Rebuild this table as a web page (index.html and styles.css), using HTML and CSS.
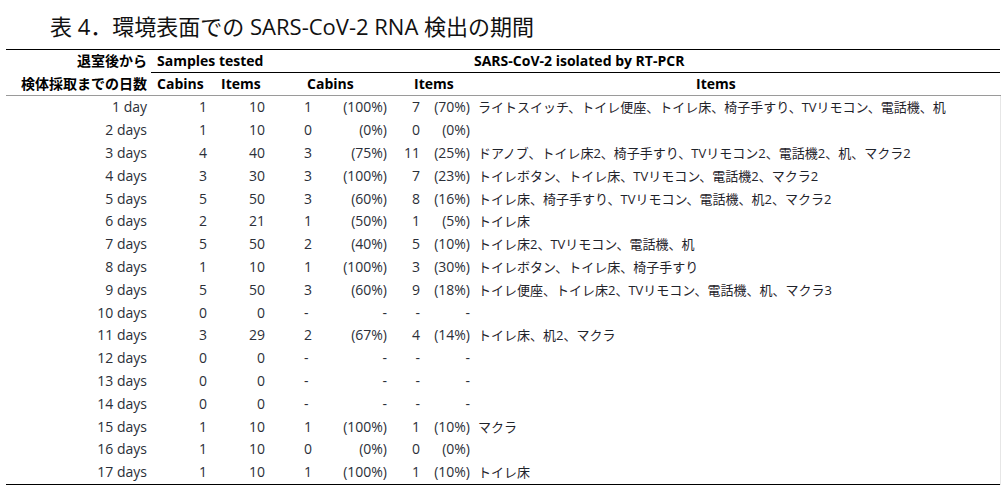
FILE: index.html
```html
<!DOCTYPE html>
<html lang="ja">
<head>
<meta charset="utf-8">
<title>表4．環境表面での SARS-CoV-2 RNA 検出の期間</title>
<link rel="stylesheet" href="styles.css">
</head>
<body>
<h1 class="title">表 4．環境表面での SARS-CoV-2 RNA 検出の期間</h1>
<table class="tbl">
  <colgroup>
    <col class="w-days"><col class="w-sc"><col class="w-si"><col class="w-cc"><col class="w-cp"><col class="w-ic"><col class="w-ip"><col class="w-it">
  </colgroup>
  <thead>
    <tr class="hr1">
      <th class="h-days">退室後から</th>
      <th class="h-samples" colspan="2">Samples tested</th>
      <th class="h-sars" colspan="5">SARS-CoV-2 isolated by RT-PCR</th>
    </tr>
    <tr class="hr2">
      <th class="h-days">検体採取までの日数</th>
      <th class="h-scab">Cabins</th>
      <th class="h-sitm">Items</th>
      <th class="h-ccab" colspan="2">Cabins</th>
      <th class="h-citm" colspan="2">Items</th>
      <th class="h-list">Items</th>
    </tr>
  </thead>
  <tbody>
    <tr><td class="d">1 day</td><td class="n1">1</td><td class="n2">10</td><td class="c">1</td><td class="p">(100%)</td><td class="ic">7</td><td class="ip">(70%)</td><td class="it">ライトスイッチ、トイレ便座、トイレ床、椅子手すり、TVリモコン、電話機、机</td></tr>
    <tr><td class="d">2 days</td><td class="n1">1</td><td class="n2">10</td><td class="c">0</td><td class="p">(0%)</td><td class="ic">0</td><td class="ip">(0%)</td><td class="it"></td></tr>
    <tr><td class="d">3 days</td><td class="n1">4</td><td class="n2">40</td><td class="c">3</td><td class="p">(75%)</td><td class="ic">11</td><td class="ip">(25%)</td><td class="it">ドアノブ、トイレ床2、椅子手すり、TVリモコン2、電話機2、机、マクラ2</td></tr>
    <tr><td class="d">4 days</td><td class="n1">3</td><td class="n2">30</td><td class="c">3</td><td class="p">(100%)</td><td class="ic">7</td><td class="ip">(23%)</td><td class="it">トイレボタン、トイレ床、TVリモコン、電話機2、マクラ2</td></tr>
    <tr><td class="d">5 days</td><td class="n1">5</td><td class="n2">50</td><td class="c">3</td><td class="p">(60%)</td><td class="ic">8</td><td class="ip">(16%)</td><td class="it">トイレ床、椅子手すり、TVリモコン、電話機、机2、マクラ2</td></tr>
    <tr><td class="d">6 days</td><td class="n1">2</td><td class="n2">21</td><td class="c">1</td><td class="p">(50%)</td><td class="ic">1</td><td class="ip">(5%)</td><td class="it">トイレ床</td></tr>
    <tr><td class="d">7 days</td><td class="n1">5</td><td class="n2">50</td><td class="c">2</td><td class="p">(40%)</td><td class="ic">5</td><td class="ip">(10%)</td><td class="it">トイレ床2、TVリモコン、電話機、机</td></tr>
    <tr><td class="d">8 days</td><td class="n1">1</td><td class="n2">10</td><td class="c">1</td><td class="p">(100%)</td><td class="ic">3</td><td class="ip">(30%)</td><td class="it">トイレボタン、トイレ床、椅子手すり</td></tr>
    <tr><td class="d">9 days</td><td class="n1">5</td><td class="n2">50</td><td class="c">3</td><td class="p">(60%)</td><td class="ic">9</td><td class="ip">(18%)</td><td class="it">トイレ便座、トイレ床2、TVリモコン、電話機、机、マクラ3</td></tr>
    <tr><td class="d">10 days</td><td class="n1">0</td><td class="n2">0</td><td class="c">-</td><td class="p">-</td><td class="ic">-</td><td class="ip">-</td><td class="it"></td></tr>
    <tr><td class="d">11 days</td><td class="n1">3</td><td class="n2">29</td><td class="c">2</td><td class="p">(67%)</td><td class="ic">4</td><td class="ip">(14%)</td><td class="it">トイレ床、机2、マクラ</td></tr>
    <tr><td class="d">12 days</td><td class="n1">0</td><td class="n2">0</td><td class="c">-</td><td class="p">-</td><td class="ic">-</td><td class="ip">-</td><td class="it"></td></tr>
    <tr><td class="d">13 days</td><td class="n1">0</td><td class="n2">0</td><td class="c">-</td><td class="p">-</td><td class="ic">-</td><td class="ip">-</td><td class="it"></td></tr>
    <tr><td class="d">14 days</td><td class="n1">0</td><td class="n2">0</td><td class="c">-</td><td class="p">-</td><td class="ic">-</td><td class="ip">-</td><td class="it"></td></tr>
    <tr><td class="d">15 days</td><td class="n1">1</td><td class="n2">10</td><td class="c">1</td><td class="p">(100%)</td><td class="ic">1</td><td class="ip">(10%)</td><td class="it">マクラ</td></tr>
    <tr><td class="d">16 days</td><td class="n1">1</td><td class="n2">10</td><td class="c">0</td><td class="p">(0%)</td><td class="ic">0</td><td class="ip">(0%)</td><td class="it"></td></tr>
    <tr><td class="d">17 days</td><td class="n1">1</td><td class="n2">10</td><td class="c">1</td><td class="p">(100%)</td><td class="ic">1</td><td class="ip">(10%)</td><td class="it">トイレ床</td></tr>
  </tbody>
</table>
</body>
</html>
```
FILE: styles.css
```css
html, body {
  margin: 0;
  padding: 0;
  background: #fff;
}
body {
  font-family: "Open Sans", "Noto Sans CJK JP", sans-serif;
  color: #000;
}
.title {
  margin: 0;
  padding: 11px 0 0 50px;
  height: 30px;
  font-size: 22px;
  line-height: 30px;
  font-weight: 400;
  color: #111;
}
.tbl {
  margin: 8px 0 0 6px;
  width: 994px;
  table-layout: fixed;
  border-collapse: collapse;
  border-top: 1px solid #000;
  border-bottom: 1px solid #000;
  font-size: 14px;
}
.w-days { width: 145px; }
.w-sc { width: 59px; }
.w-si { width: 58px; }
.w-cc { width: 57px; }
.w-cp { width: 65px; }
.w-ic { width: 33px; }
.w-ip { width: 50px; }
.w-it { width: 527px; }

.tbl th {
  padding: 0;
  height: 22px;
  line-height: 22px;
  font-weight: 700;
  color: #000;
  text-align: left;
  white-space: nowrap;
}
.tbl .hr1 .h-samples,
.tbl .hr1 .h-sars {
  border-bottom: 1px solid #000;
}
.tbl .hr2 th {
  border-bottom: 1px solid #9a9a9a;
}
.tbl th.h-days { text-align: right; padding-right: 4px; }
.tbl th.h-samples { padding-left: 6px; }
.tbl th.h-sars { padding-left: 206px; }
.tbl th.h-scab { padding-left: 6px; }
.tbl th.h-sitm { padding-left: 11px; }
.tbl th.h-ccab { padding-left: 39px; }
.tbl th.h-citm { padding-left: 24px; }
.tbl th.h-list { padding-left: 223px; }

.tbl td {
  padding: 0;
  height: 22.8px;
  line-height: 22px;
  color: #2b2f38;
  white-space: nowrap;
  overflow: hidden;
}
.tbl td.d { text-align: right; padding-right: 4px; }
.tbl td.n1 { text-align: right; padding-right: 3px; }
.tbl td.n2 { text-align: right; padding-right: 3px; }
.tbl td.c { text-align: left; padding-left: 36px; }
.tbl td.p { text-align: right; padding-right: 3px; }
.tbl td.ic { text-align: right; padding-right: 3px; }
.tbl td.ip { text-align: right; padding-right: 3px; }
.tbl td.it {
  text-align: left;
  padding-left: 5px;
  font-size: 13px;
  color: #1f232b;
  border-right: 1px solid #e6e6e6;
}
```
